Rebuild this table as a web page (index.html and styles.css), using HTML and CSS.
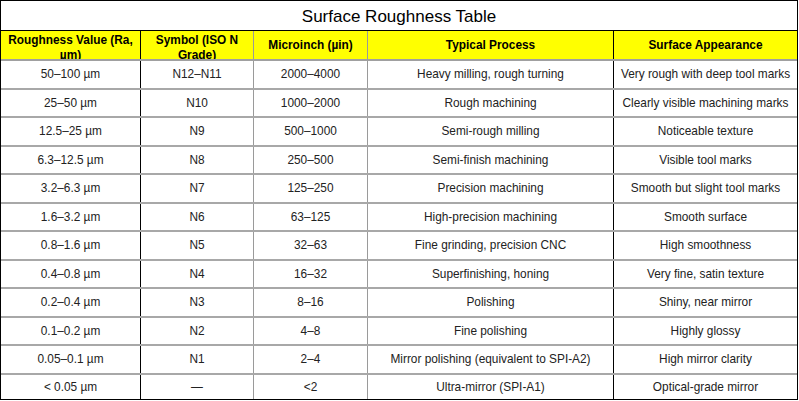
FILE: index.html
```html
<!DOCTYPE html>
<html lang="en">
<head>
<meta charset="utf-8">
<title>Surface Roughness Table</title>
<link rel="stylesheet" href="styles.css">
</head>
<body>
<div class="sheet">
  <div class="title">Surface Roughness Table</div>
  <div class="row head">
    <div class="cell c1"><div class="wrap">Roughness Value (Ra, µm)</div></div>
    <div class="cell c2"><div class="wrap">Symbol (ISO N Grade)</div></div>
    <div class="cell c3"><div class="wrap">Microinch (µin)</div></div>
    <div class="cell c4"><div class="wrap">Typical Process</div></div>
    <div class="cell c5"><div class="wrap">Surface Appearance</div></div>
  </div>
  <div class="row"><div class="cell c1">50–100 µm</div><div class="cell c2">N12–N11</div><div class="cell c3">2000–4000</div><div class="cell c4">Heavy milling, rough turning</div><div class="cell c5">Very rough with deep tool marks</div></div>
  <div class="row"><div class="cell c1">25–50 µm</div><div class="cell c2">N10</div><div class="cell c3">1000–2000</div><div class="cell c4">Rough machining</div><div class="cell c5">Clearly visible machining marks</div></div>
  <div class="row"><div class="cell c1">12.5–25 µm</div><div class="cell c2">N9</div><div class="cell c3">500–1000</div><div class="cell c4">Semi-rough milling</div><div class="cell c5">Noticeable texture</div></div>
  <div class="row"><div class="cell c1">6.3–12.5 µm</div><div class="cell c2">N8</div><div class="cell c3">250–500</div><div class="cell c4">Semi-finish machining</div><div class="cell c5">Visible tool marks</div></div>
  <div class="row"><div class="cell c1">3.2–6.3 µm</div><div class="cell c2">N7</div><div class="cell c3">125–250</div><div class="cell c4">Precision machining</div><div class="cell c5">Smooth but slight tool marks</div></div>
  <div class="row"><div class="cell c1">1.6–3.2 µm</div><div class="cell c2">N6</div><div class="cell c3">63–125</div><div class="cell c4">High-precision machining</div><div class="cell c5">Smooth surface</div></div>
  <div class="row"><div class="cell c1">0.8–1.6 µm</div><div class="cell c2">N5</div><div class="cell c3">32–63</div><div class="cell c4">Fine grinding, precision CNC</div><div class="cell c5">High smoothness</div></div>
  <div class="row"><div class="cell c1">0.4–0.8 µm</div><div class="cell c2">N4</div><div class="cell c3">16–32</div><div class="cell c4">Superfinishing, honing</div><div class="cell c5">Very fine, satin texture</div></div>
  <div class="row"><div class="cell c1">0.2–0.4 µm</div><div class="cell c2">N3</div><div class="cell c3">8–16</div><div class="cell c4">Polishing</div><div class="cell c5">Shiny, near mirror</div></div>
  <div class="row"><div class="cell c1">0.1–0.2 µm</div><div class="cell c2">N2</div><div class="cell c3">4–8</div><div class="cell c4">Fine polishing</div><div class="cell c5">Highly glossy</div></div>
  <div class="row"><div class="cell c1">0.05–0.1 µm</div><div class="cell c2">N1</div><div class="cell c3">2–4</div><div class="cell c4">Mirror polishing (equivalent to SPI-A2)</div><div class="cell c5">High mirror clarity</div></div>
  <div class="row last"><div class="cell c1">&lt; 0.05 µm</div><div class="cell c2">—</div><div class="cell c3">&lt;2</div><div class="cell c4">Ultra-mirror (SPI-A1)</div><div class="cell c5">Optical-grade mirror</div></div>
</div>
</body>
</html>
```

FILE: styles.css
```css
html, body {
  margin: 0;
  padding: 0;
  background: #ffffff;
}

.sheet {
  box-sizing: border-box;
  width: 798px;
  height: 400px;
  border: 1px solid #000;
  display: flex;
  flex-direction: column;
  font-family: "Liberation Sans", Arial, sans-serif;
  font-size: 11.85px;
  color: #222;
}

.title {
  box-sizing: border-box;
  height: 30px;
  flex: none;
  border-bottom: 1px solid #000;
  display: flex;
  align-items: center;
  justify-content: center;
  font-size: 17px;
  color: #000;
  padding-top: 2px;
}

.row {
  box-sizing: border-box;
  flex: none;
  height: 28.5px;
  display: grid;
  grid-template-columns: 139px 113px 114px 246px 184px;
  border-bottom: 2px solid #a8a8a8;
}

.row.head {
  height: 30px;
  background: #ffff00;
  font-weight: bold;
  color: #000;
  border-bottom: 2px solid #a0a0a0;
}

.row.last {
  flex: 1;
  border-bottom: none;
}

.cell {
  display: flex;
  align-items: center;
  justify-content: center;
  text-align: center;
  white-space: nowrap;
  overflow: hidden;
}

.c2, .c5 {
  border-left: 1px solid #000;
}

.c3, .c4 {
  border-left: 1px solid #9a9a9a;
}

.head .cell {
  align-items: flex-start;
}

.head .c3, .head .c4, .head .c5 {
  align-items: center;
}

.wrap {
  white-space: normal;
  line-height: 14.5px;
  padding: 2px 5px 0;
}

.head .c3 .wrap, .head .c4 .wrap, .head .c5 .wrap {
  padding-top: 0;
}
```
